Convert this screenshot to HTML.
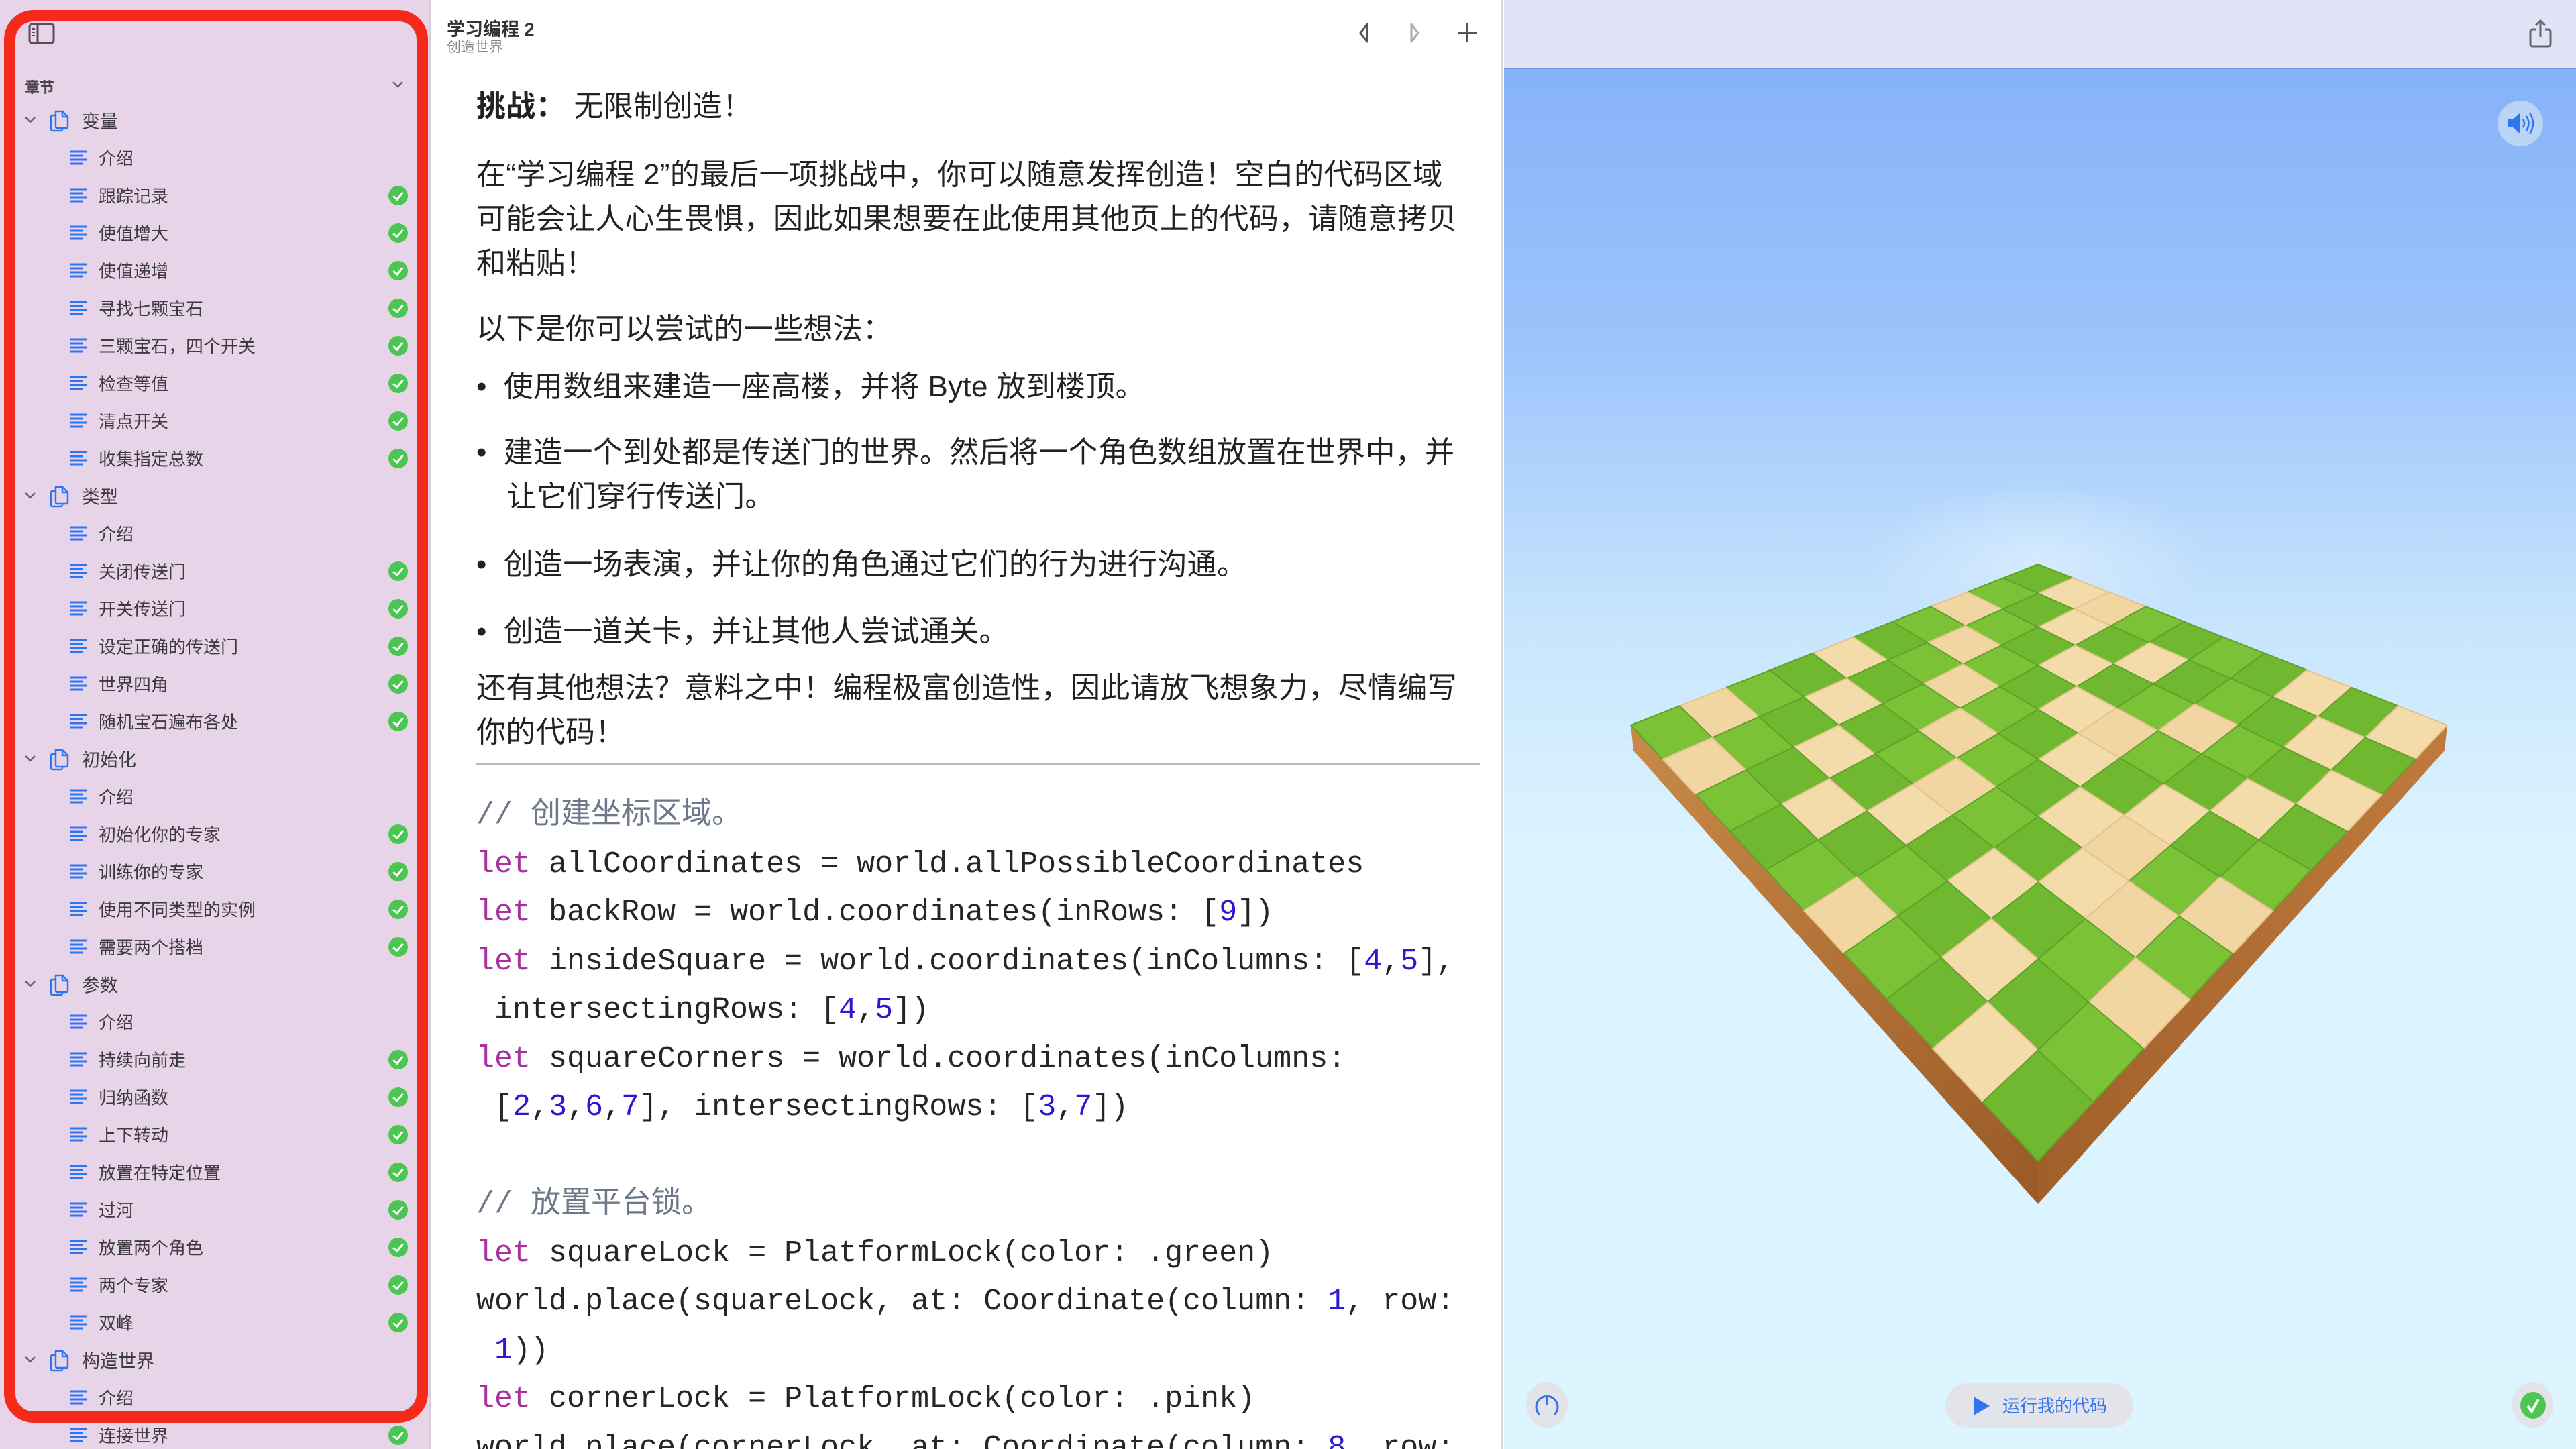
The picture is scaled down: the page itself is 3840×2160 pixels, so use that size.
<!DOCTYPE html>
<html><head><meta charset="utf-8">
<style>
*{margin:0;padding:0;box-sizing:border-box}
html,body{width:3840px;height:2160px;overflow:hidden;background:#fff;font-family:"Liberation Sans","Noto Sans CJK SC",sans-serif}
body{position:relative}
#side{position:absolute;left:0;top:0;width:642px;height:2160px;background:#e8d4e8;border-right:2px solid #d6d0d6;overflow:hidden}
#red{position:absolute;left:6px;top:15px;width:632px;height:2106px;border:17px solid #f52a1a;border-radius:44px}
.row{position:absolute;left:0;width:640px;height:56px;font-size:26px;color:#3c3a3e;white-space:nowrap}
.row span{position:absolute;top:50%;transform:translateY(-50%)}
.it span.t{left:147px}
.ch span.t{left:122px;font-size:27px}
.ic{position:absolute;left:104px;top:16px}
.ck{position:absolute;left:579px;top:14px;width:29px;height:29px;border-radius:50%;background:#4cc552}
.ck:after{content:"";position:absolute;left:10px;top:6px;width:6px;height:12px;border:solid #fff;border-width:0 3px 3px 0;transform:rotate(40deg)}
#mid{position:absolute;left:644px;top:0;width:1596px;height:2160px;background:#fff;border-right:2px solid #d8d8d8;overflow:hidden}
.p{position:absolute;left:66px;font-size:44px;color:#222;white-space:nowrap;line-height:66px;letter-spacing:0.3px}
.code{position:absolute;left:66px;font-family:"Liberation Mono","Noto Sans CJK SC",monospace;font-size:45px;color:#262626;white-space:pre;line-height:72.5px}
.k{color:#a8309f}.n{color:#2b18d0}.c{color:#6d7888}
#right{position:absolute;left:2242px;top:0;width:1598px;height:2160px;overflow:hidden;background:linear-gradient(#86b2fa 103px,#9cc3fb 500px,#c9e6fd 950px,#dbf3ff 1250px,#ddf5ff)}
#topbar{position:absolute;left:0;top:0;width:1598px;height:103px;background:#e3e3f7;border-bottom:2px solid #6b95e4}
</style></head><body>
<div id="side">
<svg style="position:absolute;left:42px;top:34px" width="40" height="32" viewBox="0 0 40 32"><rect x="2" y="2" width="36" height="28" rx="4" fill="none" stroke="#5a4a5a" stroke-width="3"/><line x1="14" y1="2" x2="14" y2="30" stroke="#5a4a5a" stroke-width="3"/><line x1="6" y1="9" x2="10" y2="9" stroke="#5a4a5a" stroke-width="2"/><line x1="6" y1="14" x2="10" y2="14" stroke="#5a4a5a" stroke-width="2"/><line x1="6" y1="19" x2="10" y2="19" stroke="#5a4a5a" stroke-width="2"/></svg>
<div style="position:absolute;left:37px;top:113px;font-size:22px;font-weight:bold;color:#4a444c">章节</div>
<svg style="position:absolute;left:584px;top:120px" width="18" height="12"><polyline points="2,2 9,9 16,2" fill="none" stroke="#6a6070" stroke-width="2.5"/></svg>
<div id="list"></div>
<div id="red"></div>
</div>

<div id="mid">
<div style="position:absolute;left:22px;top:22px;font-size:27px;font-weight:bold;color:#333">学习编程 2</div>
<div style="position:absolute;left:22px;top:54px;font-size:21px;color:#888">创造世界</div>
<svg style="position:absolute;left:1370px;top:32px" width="200" height="36">
<polygon points="24,4 14,17 24,30" fill="none" stroke="#555" stroke-width="3" stroke-linejoin="round"/>
<polygon points="90,4 100,17 90,30" fill="none" stroke="#aaa" stroke-width="3" stroke-linejoin="round"/>
<line x1="173" y1="3" x2="173" y2="31" stroke="#555" stroke-width="3"/><line x1="159" y1="17" x2="187" y2="17" stroke="#555" stroke-width="3"/>
</svg>
<div class="p" style="top:126px"><b>挑战：</b> 无限制创造！</div>
<div class="p" style="top:228px">在“学习编程 2”的最后一项挑战中，你可以随意发挥创造！空白的代码区域<br>可能会让人心生畏惧，因此如果想要在此使用其他页上的代码，请随意拷贝<br>和粘贴！</div>
<div class="p" style="top:458px">以下是你可以尝试的一些想法：</div>
<div class="p" style="top:544px">•&nbsp; 使用数组来建造一座高楼，并将 Byte 放到楼顶。</div>
<div class="p" style="top:642px">•&nbsp; 建造一个到处都是传送门的世界。然后将一个角色数组放置在世界中，并<br><span style="padding-left:46px">让它们穿行传送门。</span></div>
<div class="p" style="top:809px">•&nbsp; 创造一场表演，并让你的角色通过它们的行为进行沟通。</div>
<div class="p" style="top:909px">•&nbsp; 创造一道关卡，并让其他人尝试通关。</div>
<div class="p" style="top:993px">还有其他想法？意料之中！编程极富创造性，因此请放飞想象力，尽情编写<br>你的代码！</div>
<div style="position:absolute;left:66px;top:1138px;width:1496px;height:3px;background:#b8b8b8"></div>
<div class="code" style="top:1180px"><span class="c">// 创建坐标区域。</span>
<span class="k">let</span> allCoordinates = world.allPossibleCoordinates
<span class="k">let</span> backRow = world.coordinates(inRows: [<span class="n">9</span>])
<span class="k">let</span> insideSquare = world.coordinates(inColumns: [<span class="n">4</span>,<span class="n">5</span>],
 intersectingRows: [<span class="n">4</span>,<span class="n">5</span>])
<span class="k">let</span> squareCorners = world.coordinates(inColumns:
 [<span class="n">2</span>,<span class="n">3</span>,<span class="n">6</span>,<span class="n">7</span>], intersectingRows: [<span class="n">3</span>,<span class="n">7</span>])

<span class="c">// 放置平台锁。</span>
<span class="k">let</span> squareLock = PlatformLock(color: .green)
world.place(squareLock, at: Coordinate(column: <span class="n">1</span>, row:
 <span class="n">1</span>))
<span class="k">let</span> cornerLock = PlatformLock(color: .pink)
world.place(cornerLock, at: Coordinate(column: <span class="n">8</span>, row:</div>
</div>

<div id="right">
<div id="topbar"></div>
<svg style="position:absolute;left:1525px;top:28px" width="40" height="44" viewBox="0 0 40 44"><path d="M13 16 H8 a3 3 0 0 0 -3 3 V38 a3 3 0 0 0 3 3 H32 a3 3 0 0 0 3 -3 V19 a3 3 0 0 0 -3 -3 H27" fill="none" stroke="#666" stroke-width="3"/><line x1="20" y1="3" x2="20" y2="27" stroke="#666" stroke-width="3"/><polyline points="13,10 20,3 27,10" fill="none" stroke="#666" stroke-width="3"/></svg>
<div style="position:absolute;left:1481px;top:150px;width:68px;height:68px;border-radius:50%;background:#bad5f3"></div>
<svg style="position:absolute;left:1494px;top:164px" width="44" height="40" viewBox="0 0 44 40"><path d="M3 14 H10 L20 5 V35 L10 26 H3 Z" fill="#2f74f0"/><path d="M25 14 Q29 20 25 26" fill="none" stroke="#2f74f0" stroke-width="2.5"/><path d="M30 9 Q37 20 30 31" fill="none" stroke="#2f74f0" stroke-width="2.5"/><path d="M35 4 Q45 20 35 36" fill="none" stroke="#2f74f0" stroke-width="2.5"/></svg>
<svg id="board" style="position:absolute;left:0;top:0" width="1598" height="2160"></svg>
<div style="position:absolute;left:33px;top:2060px;width:62px;height:68px;border-radius:50%;background:#e3e3ea"></div>
<svg style="position:absolute;left:44px;top:2073px" width="40" height="42"><path d="M9 36 A16 16 0 1 1 31 36" fill="none" stroke="#2f74f0" stroke-width="3"/><line x1="20" y1="8" x2="20" y2="22" stroke="#2f74f0" stroke-width="2.5"/></svg>
<div style="position:absolute;left:658px;top:2062px;width:280px;height:66px;border-radius:33px;background:#e3e3ea"></div>
<svg style="position:absolute;left:698px;top:2080px" width="28" height="32"><polygon points="2,2 26,16 2,30" fill="#2f74f0"/></svg>
<div style="position:absolute;left:743px;top:2076px;font-size:26px;color:#2f74f0">运行我的代码</div>
<div style="position:absolute;left:1502px;top:2060px;width:62px;height:68px;border-radius:50%;background:#e3e3ea"></div>
<div style="position:absolute;left:1515px;top:2075px;width:38px;height:40px;border-radius:50%;background:#4cc552"></div>
<svg style="position:absolute;left:1515px;top:2075px" width="38" height="40"><polyline points="11,21 17,29 27,11" fill="none" stroke="#fff" stroke-width="4"/></svg>
</div>

<script>
(function(){
var chapters=[["变量",["介绍","跟踪记录","使值增大","使值递增","寻找七颗宝石","三颗宝石，四个开关","检查等值","清点开关","收集指定总数"]],
["类型",["介绍","关闭传送门","开关传送门","设定正确的传送门","世界四角","随机宝石遍布各处"]],
["初始化",["介绍","初始化你的专家","训练你的专家","使用不同类型的实例","需要两个搭档"]],
["参数",["介绍","持续向前走","归纳函数","上下转动","放置在特定位置","过河","放置两个角色","两个专家","双峰"]],
["构造世界",["介绍","连接世界"]]];
var h="",y=179-28,step=56.0;
var lines='<svg class="ic" width="28" height="24"><g stroke="#2f74f0" stroke-width="3"><line x1="1" y1="3" x2="26" y2="3"/><line x1="1" y1="9" x2="20" y2="9"/><line x1="1" y1="15" x2="26" y2="15"/><line x1="1" y1="21" x2="20" y2="21"/></g></svg>';
var book='<svg style="position:absolute;left:74px;top:12px" width="30" height="34" viewBox="0 0 30 34"><path d="M9 3 H19 L27 11 V26 a2 2 0 0 1 -2 2 H11 a2 2 0 0 1 -2 -2 Z" fill="none" stroke="#2f74f0" stroke-width="2.5"/><path d="M19 3 V11 H27" fill="none" stroke="#2f74f0" stroke-width="2.5"/><path d="M9 9 H4 a2 2 0 0 0 -2 2 V30 a2 2 0 0 0 2 2 H17 a2 2 0 0 0 2 -2 V28" fill="none" stroke="#2f74f0" stroke-width="2.5"/></svg>';
var chev='<svg style="position:absolute;left:36px;top:22px" width="18" height="12"><polyline points="2,2 9,9 16,2" fill="none" stroke="#6a6070" stroke-width="2.5"/></svg>';
chapters.forEach(function(c){
 h+='<div class="row ch" style="top:'+y+'px">'+chev+book+'<span class="t">'+c[0]+'</span></div>';y+=step;
 c[1].forEach(function(t,i){
  var ck=(t!=="介绍")?'<div class="ck"></div>':'';
  h+='<div class="row it" style="top:'+y+'px">'+lines+'<span class="t">'+t+'</span>'+ck+'</div>';y+=step;
 });
});
document.getElementById("list").innerHTML=h;

var ox=2242;
var p0=[3038-ox,841],p1=[3648-ox,1081],p2=[3038-ox,1731],p3=[2431-ox,1081];
var dx1=p1[0]-p2[0],dx2=p3[0]-p2[0],dx3=p0[0]-p1[0]+p2[0]-p3[0];
var dy1=p1[1]-p2[1],dy2=p3[1]-p2[1],dy3=p0[1]-p1[1]+p2[1]-p3[1];
var den=dx1*dy2-dx2*dy1;
var g=(dx3*dy2-dx2*dy3)/den,hh=(dx1*dy3-dx3*dy1)/den;
var a=p1[0]-p0[0]+g*p1[0],b=p3[0]-p0[0]+hh*p3[0],c0=p0[0];
var d=p1[1]-p0[1]+g*p1[1],e=p3[1]-p0[1]+hh*p3[1],f0=p0[1];
function H(u,v){var w=g*u+hh*v+1;return [(a*u+b*v+c0)/w,(d*u+e*v+f0)/w];}
function BL(u,v){return [p0[0]+u*(p1[0]-p0[0])+v*(p3[0]-p0[0])+u*v*(p2[0]-p1[0]-p3[0]+p0[0]),p0[1]+u*(p1[1]-p0[1])+v*(p3[1]-p0[1])+u*v*(p2[1]-p1[1]-p3[1]+p0[1])];}
function P(u,v){var x=H(u,v),y=BL(u,v);return [((x[0]+y[0])/2).toFixed(1),((x[1]+y[1])/2).toFixed(1)];}
var T=p0,R=p1,B=p2,L=p3;
var s='<defs><linearGradient id="lg" x1="0" y1="0" x2="1" y2="1"><stop offset="0" stop-color="#c98a48"/><stop offset="1" stop-color="#9a5a26"/></linearGradient><linearGradient id="rg" x1="0" y1="0" x2="1" y2="0"><stop offset="0" stop-color="#a0602a"/><stop offset="1" stop-color="#c07a3c"/></linearGradient><radialGradient id="glow" cx="0.5" cy="0.5" r="0.5"><stop offset="0" stop-color="#d8ecff" stop-opacity="0.9"/><stop offset="1" stop-color="#d8ecff" stop-opacity="0"/></radialGradient></defs>';
s+='<ellipse cx="'+T[0]+'" cy="840" rx="260" ry="120" fill="url(#glow)"/>';
s+='<polygon points="'+L[0]+','+L[1]+' '+B[0]+','+B[1]+' '+B[0]+','+(B[1]+64)+' '+(L[0]+4)+','+(L[1]+38)+'" fill="url(#lg)"/>';
s+='<polygon points="'+R[0]+','+R[1]+' '+B[0]+','+B[1]+' '+B[0]+','+(B[1]+64)+' '+(R[0]-4)+','+(R[1]+38)+'" fill="url(#rg)"/>';
var pat=[
"GSSGGGGSGS",
"GGSGSGGGSG",
"SGGSGGSGGS",
"GSGGSSGGSG",
"GGSGGSGSGG",
"SGGSGGSSGS",
"GSGGSGGSSG",
"GGSGSGSGGS",
"SGGSGGGSGG",
"GSGGGSGGSG"];
var n=10;
for(var r=0;r<n;r++)for(var c=0;c<n;c++){
 var A=P(c/n,r/n),Bq=P((c+1)/n,r/n),D=P((c+1)/n,(r+1)/n),E=P(c/n,(r+1)/n);
 var sand=pat[r][c]==="S";
 var col=sand?((r+c)%2?"#f4dcaa":"#f1d6a2"):((r+c)%2?"#7cc236":"#70b830");
 s+='<polygon points="'+A+' '+Bq+' '+D+' '+E+'" fill="'+col+'" stroke="'+(sand?"#e4c28c":"#5ea22a")+'" stroke-width="2"/>';
}
document.getElementById("board").innerHTML=s;
})();
</script>
</body></html>
